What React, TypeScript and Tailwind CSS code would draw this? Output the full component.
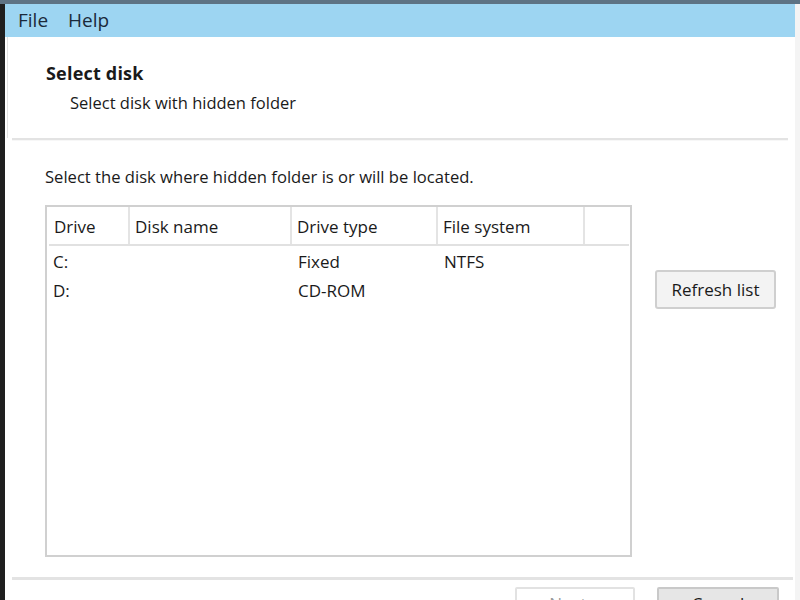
import React from 'react';

const columns = [
  { title: 'Drive', w: 'w-[81px]' },
  { title: 'Disk name', w: 'w-[162px]' },
  { title: 'Drive type', w: 'w-[146px]' },
  { title: 'File system', w: 'w-[147px]' },
  { title: '', w: 'w-[44px]' },
];

const drives = [
  { drive: 'C:', name: '', type: 'Fixed', fs: 'NTFS' },
  { drive: 'D:', name: '', type: 'CD-ROM', fs: '' },
];

export default function App() {
  return (
    <div className="w-[800px] h-[600px] overflow-hidden bg-white flex flex-col text-[#1a1a1a] font-['Open_Sans','Liberation_Sans',sans-serif]">
      <div className="h-[4px] bg-[#5e7384] shrink-0" />
      <div className="flex flex-1 min-h-0">
        <div className="w-[5px] bg-[#1f1f1f] shrink-0" />
        <div className="flex-1 flex flex-col min-w-0 border-r-[5px] border-[#f4f4f4]">
          {/* menu */}
          <div className="h-[33px] bg-[#9dd5f2] flex items-center gap-[20px] pl-[13px] text-[19px] text-[#1b2a3a] shrink-0">
            <span>File</span>
            <span>Help</span>
          </div>

          {/* header */}
          <div className="h-[101px] bg-white border-l border-[#e2e2e2] ml-[2px] pl-[38px] pt-[23px] shrink-0">
            <div className="text-[18px] font-bold leading-[26px] tracking-[0.2px]">Select disk</div>
            <div className="text-[16.5px] leading-[24px] pl-[24px] mt-[5px]">Select disk with hidden folder</div>
          </div>
          <div className="h-[3px] mx-[7px] bg-[#e3e3e3] border-b border-[#f7f7f7] shrink-0" />

          {/* body */}
          <div className="flex-1 pl-[40px] pt-[24px]">
            <div className="text-[16.6px] leading-[24px]">Select the disk where hidden folder is or will be located.</div>
            <div className="flex mt-[16px]">
              <div className="w-[587px] h-[352px] border-2 border-[#d0d0d0] bg-white pl-[2px]">
                <div className="flex h-[39px] border-b-2 border-[#e1e1e1] w-[580px]">
                  {columns.map((c, i) => (
                    <div
                      key={i}
                      className={`${c.w} h-full flex items-center pl-[5px] pt-[3px] text-[17px] ${i < columns.length - 1 ? 'border-r-2 border-[#e4e4e4]' : ''}`}
                    >
                      {c.title}
                    </div>
                  ))}
                </div>
                {drives.map((d) => (
                  <div key={d.drive} className="flex h-[29px] items-center text-[17px] pt-[2px]">
                    <div className="w-[81px] pl-[4px]">{d.drive}</div>
                    <div className="w-[162px]">{d.name}</div>
                    <div className="w-[146px] pl-[6px]">{d.type}</div>
                    <div className="w-[147px] pl-[6px]">{d.fs}</div>
                  </div>
                ))}
              </div>
              <div className="ml-[23px] pt-[65px]">
                <button className="w-[121px] h-[39px] rounded-[3px] border-2 border-[#cfcfcf] bg-[#f3f3f3] text-[17px]">
                  Refresh list
                </button>
              </div>
            </div>
            <div className="h-[3px] -ml-[33px] mr-[2px] mt-[20px] bg-[#e3e3e3]" />
            <div className="flex items-start -ml-[33px] pt-[7px]">
              <div className="text-[16.5px] pt-[9px] pl-[2px] flex-1">http://www.hide-folders.com</div>
              <button className="w-[120px] h-[34px] border-2 border-[#e2e2e2] bg-white text-[17px] text-[#9a9a9a] rounded-[2px]">
                Next &gt;
              </button>
              <button className="ml-[22px] mr-[16px] w-[122px] h-[34px] border-2 border-[#c9c9c9] bg-[#e6e6e6] text-[17px] rounded-[2px]">
                Cancel
              </button>
            </div>
          </div>
        </div>
      </div>
    </div>
  );
}
